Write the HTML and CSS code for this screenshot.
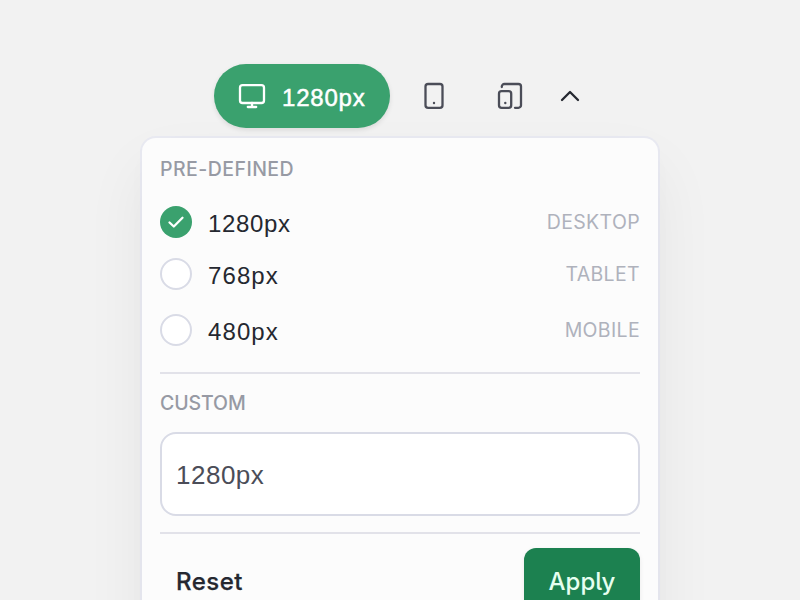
FILE: index.html
```html
<!DOCTYPE html>
<html lang="en">
<head>
<meta charset="utf-8">
<title>Breakpoints</title>
<link rel="stylesheet" href="styles.css">
</head>
<body>
<nav class="toolbar">
  <button class="pill">
    <svg class="icon" width="32" height="32" viewBox="0 0 32 32"><rect x="4" y="5.2" width="24" height="17.8" rx="2.6"/><path d="M16 23v4M11.800 27h8.400"/></svg>
    <span class="value pill-value">1280px</span>
  </button>
  <button class="tool tool-tablet"><svg class="icon" width="32" height="32" viewBox="0 0 32 32"><rect x="7.5" y="4" width="17" height="23.8" rx="2.6"/><circle class="dot" cx="16" cy="23" r="1.2"/></svg></button>
  <button class="tool tool-devices"><svg class="icon" width="32" height="32" viewBox="0 0 32 32"><path d="M7.8 7V6.6A2.6 2.6 0 0 1 10.4 4h14A2.6 2.6 0 0 1 27 6.600V25.200A2.6 2.600 0 0 1 24.400 27.800H21"/><rect x="5" y="11.100" width="12.200" height="16.700" rx="2.600"/><circle class="dot" cx="11.300" cy="23" r="1.200"/></svg></button>
  <button class="tool tool-toggle"><svg class="icon" width="20" height="32" viewBox="0 0 20 32"><path d="M2 20l8-8 8 8"/></svg></button>
</nav>
<section class="panel">
  <h2 class="heading">PRE-DEFINED</h2>
  <div class="options">
    <label class="option"><span class="radio checked"><svg width="32" height="32" viewBox="0 0 32 32"><path d="M9.500 16.500l4.300 4 8.700-8.800"/></svg></span><span class="value">1280px</span><span class="kind">DESKTOP</span></label>
    <label class="option"><span class="radio"></span><span class="value short">768px</span><span class="kind">TABLET</span></label>
    <label class="option spaced"><span class="radio"></span><span class="value short">480px</span><span class="kind">MOBILE</span></label>
  </div>
  <h2 class="heading custom">CUSTOM</h2>
  <div class="field">1280px</div>
  <footer class="actions">
    <button class="reset">Reset</button>
    <button class="apply">Apply</button>
  </footer>
</section>
</body>
</html>
```
FILE: styles.css
```css
* { box-sizing: border-box; }
html { height: 600px; overflow: hidden; }
body {
  margin: 0;
  height: 600px;
  overflow: hidden;
  padding-top: 64px;
  background: #f2f2f2;
  color: #252830;
  font-family: Inter, "Liberation Sans", sans-serif;
}
button { border: 0; margin: 0; padding: 0; background: none; color: inherit; font: inherit; }
svg { display: block; flex: none; fill: none; stroke: currentColor; stroke-width: 2.3; stroke-linecap: round; stroke-linejoin: round; }
.dot { fill: currentColor; stroke: none; }
.toolbar { display: flex; align-items: center; height: 64px; margin-left: 214px; color: #4b4d58; }
.pill {
  display: flex;
  align-items: center;
  gap: 14px;
  width: 176px;
  height: 64px;
  padding-left: 22px;
  border-radius: 32px;
  background: #3aa16e;
  color: #fff;
  box-shadow: 0 2px 5px rgba(0, 0, 0, .1);
}
.tool-tablet { margin-left: 28px; }
.tool-devices { margin-left: 44px; }
.tool-toggle { margin-left: 34px; color: #252830; }
.value { font: 24px/32px "Liberation Sans", sans-serif; letter-spacing: .65px; padding-top: 3px; }
.value.short { letter-spacing: 1.1px; }
.pill-value { letter-spacing: .8px; -webkit-text-stroke: .5px; }
.panel {
  width: 516px;
  height: 560px;
  margin: 10px 0 0 142px;
  padding: 17px 18px 0;
  border-radius: 14px;
  background: #fcfcfc;
  box-shadow: 0 0 0 2px rgba(219, 221, 240, .42), 0 30px 64px rgba(0, 0, 0, .06), 0 14px 24px rgba(0, 0, 0, .015);
}
.heading { margin: 0; color: #979aa4; font-size: 19.5px; line-height: 29px; height: 28px; font-weight: 500; letter-spacing: .45px; }
.options { padding: 23px 0 26px; border-bottom: 2px solid #e2e2e9; }
.option { display: flex; align-items: center; height: 32px; margin-bottom: 20px; }
.option.spaced { margin: 24px 0 0; }
.radio { width: 32px; height: 32px; margin-right: 16px; border: 2px solid #d9dbe6; border-radius: 50%; background: #fff; }
.checked { border: 0; background: #3aa16e; color: #fff; }
.kind { margin-left: auto; color: #afb2bc; font-size: 19.5px; line-height: 33px; letter-spacing: .35px; }
.heading.custom { margin-top: 15px; letter-spacing: -.1px; }
.field {
  height: 84px;
  margin: 15px 0 16px;
  padding: 0 0 0 14px;
  border: 2px solid #d9dbe6;
  border-radius: 16px;
  background: #fff;
  color: #4b4d58;
  font: 26px/82px "Liberation Sans", sans-serif;
  letter-spacing: .5px;
}
.actions { display: flex; justify-content: space-between; padding-top: 14px; border-top: 2px solid #e2e2e9; font-size: 24px; font-weight: 500; }
.reset { height: 68px; padding: 0 0 2px 16px; letter-spacing: .5px; -webkit-text-stroke: .25px; }
.apply { width: 116px; height: 68px; padding-bottom: 2px; border-radius: 12px; background: #1c8150; color: #e6fff0; box-shadow: 0 2px 5px rgba(0, 0, 0, .08); font-feature-settings: "cv05"; }
```
